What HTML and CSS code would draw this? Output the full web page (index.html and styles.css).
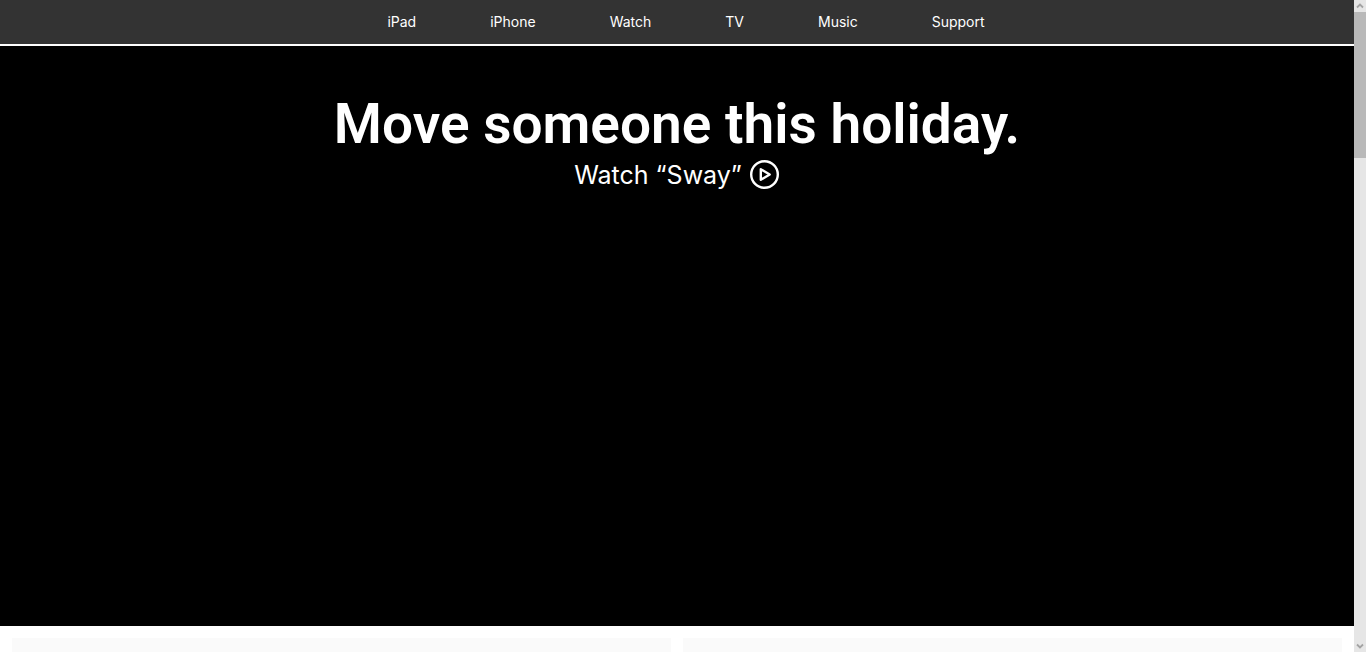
FILE: index.html
```html
<!DOCTYPE html>
<html lang="en">
<head>
<meta charset="utf-8">
<title>Move someone this holiday</title>
<link rel="stylesheet" href="styles.css">
</head>
<body>
<div class="page">
  <div class="content">
    <nav class="nav" aria-label="Main">
      <a href="#">iPad</a>
      <a href="#">iPhone</a>
      <a href="#">Watch</a>
      <a href="#">TV</a>
      <a href="#">Music</a>
      <a href="#">Support</a>
    </nav>
    <section class="hero">
      <h1 class="hero-title">Move someone this holiday.</h1>
      <a class="hero-link" href="#">Watch “Sway”
        <svg class="play" viewBox="0 0 30 30" aria-hidden="true">
          <circle cx="14.5" cy="14.5" r="13.3"/>
          <path d="M10.8 9.2v10.6l8.9-5.3z"/>
        </svg>
      </a>
    </section>
    <section class="tiles">
      <div class="tile"></div>
      <div class="tile"></div>
    </section>
  </div>
  <div class="scrollbar" aria-hidden="true">
    <svg class="arrow" viewBox="0 0 12 12"><path d="M3 7.5l3-3 3 3"/></svg>
    <div class="track"><div class="thumb"></div></div>
    <svg class="arrow" viewBox="0 0 12 12"><path d="M3 4.5l3 3 3-3"/></svg>
  </div>
</div>
</body>
</html>
```
FILE: styles.css
```css
* { box-sizing: border-box; }

body {
  margin: 0;
  background: #fff;
  color: #fff;
  font-family: Inter, "Liberation Sans", sans-serif;
}

a {
  color: inherit;
  text-decoration: none;
}

.page {
  display: grid;
  grid-template-columns: 1fr 12px;
  height: 100vh;
  overflow: hidden;
}

.content {
  min-width: 0;
  overflow: hidden;
}

.nav {
  display: flex;
  justify-content: center;
  gap: 74px;
  padding-left: 18px;
  background: #333;
  font-size: 14px;
  line-height: 44px;
}

.hero {
  display: flex;
  flex-direction: column;
  align-items: center;
  min-height: 580px;
  margin-top: 2px;
  padding-top: 48px;
  background: #000;
}

.hero-title {
  margin: 0;
  font-family: Roboto, Inter, sans-serif;
  font-size: 55px;
  font-weight: 600;
  line-height: 60px;
}

.hero-link {
  display: flex;
  align-items: center;
  gap: 8px;
  margin-top: 5px;
  font-size: 25px;
  line-height: 32px;
}

.play {
  width: 30px;
  height: 30px;
  fill: none;
  stroke: #fff;
  stroke-width: 2.4;
  stroke-linejoin: round;
}

.tiles {
  display: grid;
  grid-template-columns: 1fr 1fr;
  gap: 12px;
  padding: 12px;
}

.tile {
  min-height: 580px;
  background: #fafafa;
}

.scrollbar {
  display: flex;
  flex-direction: column;
  background: #e6e6e6;
}

.track { flex: 1; }

.thumb {
  height: 146px;
  background: #b9b9b9;
}

.arrow {
  width: 12px;
  height: 12px;
  fill: none;
  stroke: #a3a3a3;
  stroke-width: 1.8;
}
```
